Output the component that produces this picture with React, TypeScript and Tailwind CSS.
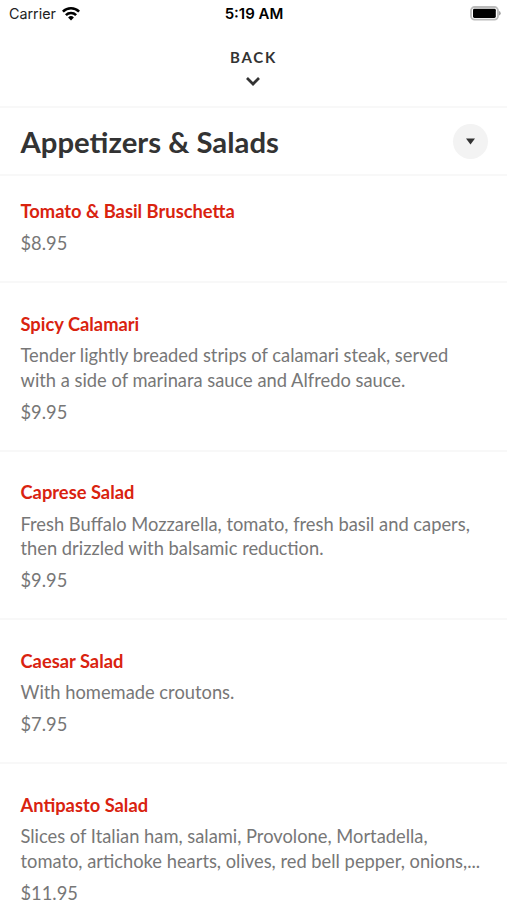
const items = [
  { name: "Tomato & Basil Bruschetta", lines: [], price: "$8.95" },
  {
    name: "Spicy Calamari",
    lines: ["Tender lightly breaded strips of calamari steak, served", "with a side of marinara sauce and Alfredo sauce."],
    price: "$9.95",
  },
  {
    name: "Caprese Salad",
    lines: ["Fresh Buffalo Mozzarella, tomato, fresh basil and capers,", "then drizzled with balsamic reduction."],
    price: "$9.95",
  },
  { name: "Caesar Salad", lines: ["With homemade croutons."], price: "$7.95" },
  {
    name: "Antipasto Salad",
    lines: ["Slices of Italian ham, salami, Provolone, Mortadella,", "tomato, artichoke hearts, olives, red bell pepper, onions,..."],
    price: "$11.95",
  },
];

function StatusBar() {
  return (
    <div className="grid h-[27px] grid-cols-3 items-center pl-[9px] pr-[6px] font-['Inter',sans-serif] text-[14.3px] text-black">
      <div className="flex items-center gap-1.5">
        <span className="text-[#222]">Carrier</span>
        <svg width="18" height="14" viewBox="0 0 18 14" fill="none" stroke="currentColor" strokeWidth="2.6" aria-hidden="true">
          <path d="M.9 4.6a11.6 11.6 0 0 1 16.2 0" />
          <path d="M3.9 8.1a7.3 7.3 0 0 1 10.2 0" />
          <path d="M9 13.5 6.1 10.5a4.1 4.1 0 0 1 5.8 0z" fill="currentColor" stroke="none" />
        </svg>
      </div>
      <span className="whitespace-nowrap pr-[2px] pt-px text-center text-[15px] font-semibold">5:19 AM</span>
      <svg className="justify-self-end" width="31" height="15" viewBox="0 0 31 15" aria-hidden="true">
        <rect x="1" y="1" width="27" height="12.6" rx="3.6" fill="none" stroke="#bbb" strokeWidth="1.8" />
        <rect x="3" y="2.8" width="22.8" height="9.2" rx="1.4" />
        <path d="M29 5a2.4 2.4 0 0 1 0 4.6z" fill="#a3a3a3" />
      </svg>
    </div>
  );
}

export default function App() {
  return (
    <div className="h-[900px] w-[507px] overflow-hidden bg-white font-['Lato',sans-serif]">
      <StatusBar />
      <button type="button" className="flex h-[79px] w-full flex-col items-center pr-px pt-5 text-[#333]">
        <span className="pl-px text-[15px] font-bold leading-5 tracking-[1.8px]">BACK</span>
        <svg className="mt-[9px]" width="16" height="11" viewBox="0 0 16 11" fill="none" stroke="currentColor" strokeWidth="2.7" aria-hidden="true">
          <path d="m2 2 6 6 6-6" />
        </svg>
      </button>
      <header className="flex h-[70px] items-center justify-between border-y-2 border-[#f8f8f8] pl-[20.5px] pr-[19px]">
        <h1 className="pt-[2px] text-[29.3px] font-bold leading-10 text-[#333]">Appetizers & Salads</h1>
        <button type="button" className="grid size-[35px] place-items-center rounded-full bg-[#f3f3f3] pt-px" aria-label="Choose section">
          <svg width="9" height="7" viewBox="0 0 9 7" fill="#333" aria-hidden="true">
            <path d="M0 .5h9L4.5 6.5z" />
          </svg>
        </button>
      </header>
      <ul>
        {items.map((item) => (
          <li
            key={item.name}
            className="border-b-2 border-[#f8f8f8] px-[20.5px] pb-[25.9px] pt-[28.4px] text-[18.32px] leading-[24.4px] text-[#777] first:pt-[23.3px]"
          >
            <h2 className="font-bold text-[#d9230f]">{item.name}</h2>
            {item.lines.length > 0 && (
              <div className="mt-[7.3px]">
                {item.lines.map((line) => (
                  <p key={line} className="whitespace-nowrap">{line}</p>
                ))}
              </div>
            )}
            <p className="mt-[7.3px]">{item.price}</p>
          </li>
        ))}
      </ul>
    </div>
  );
}
